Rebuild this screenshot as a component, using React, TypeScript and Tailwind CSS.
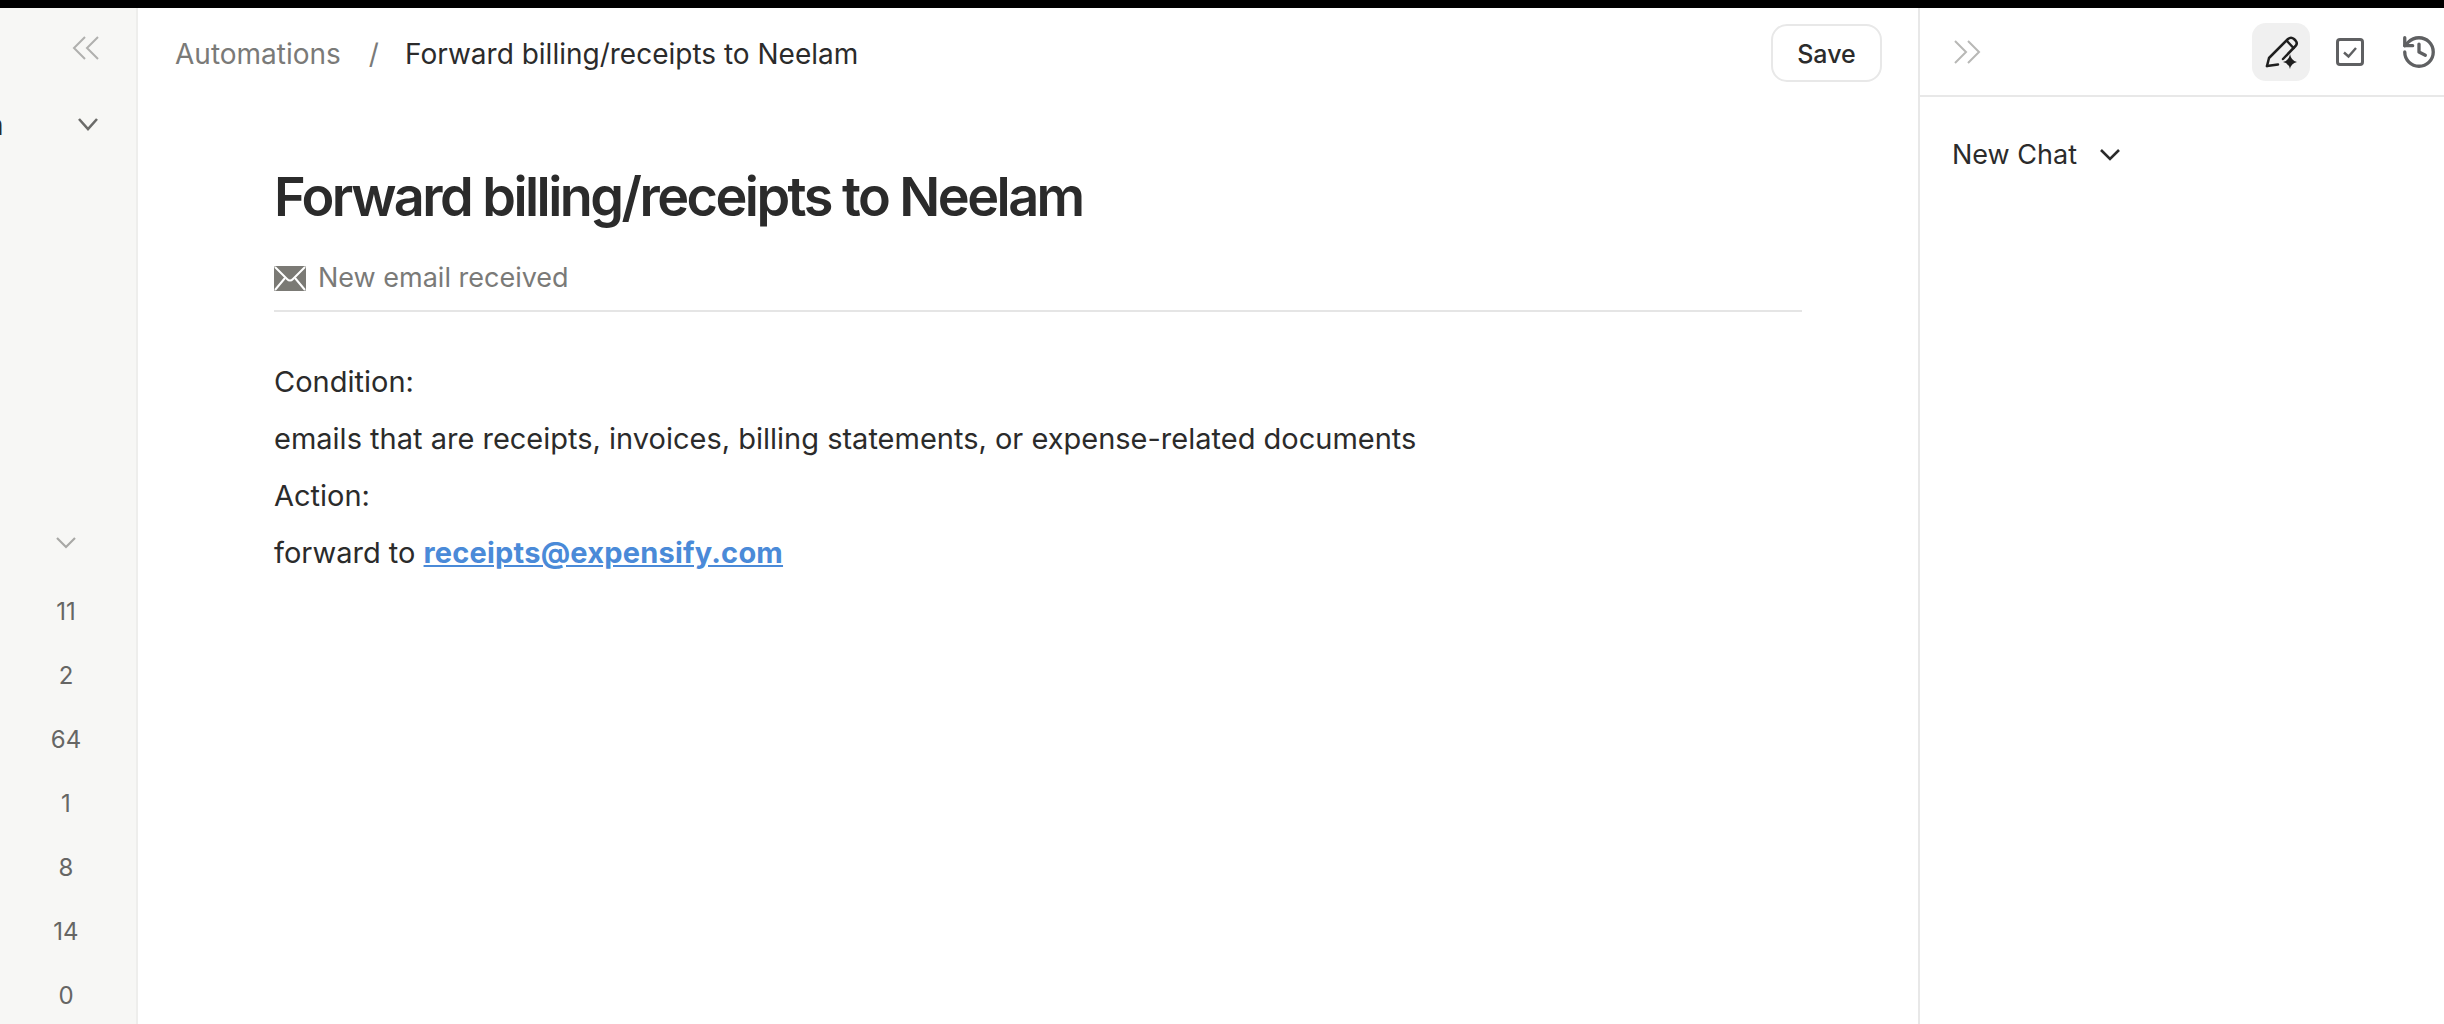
import { History } from "lucide-react";

const font = { fontFamily: "Inter, 'Liberation Sans', sans-serif" };
const counts = ["11", "2", "64", "1", "8", "14", "0"];

function Chevrons({ dir, className }: { dir: "left" | "right"; className?: string }) {
  return (
    <svg width="28" height="24" viewBox="0 0 28 24" fill="none" stroke="currentColor" strokeWidth="2" className={className}>
      {dir === "left" ? (
        <>
          <path d="M13 1 L2 12 L13 23" />
          <path d="M26 1 L15 12 L26 23" />
        </>
      ) : (
        <>
          <path d="M2 1 L13 12 L2 23" />
          <path d="M15 1 L26 12 L15 23" />
        </>
      )}
    </svg>
  );
}

function Down({ w, h, sw, className }: { w: number; h: number; sw: number; className?: string }) {
  return (
    <svg width={w} height={h} viewBox={`0 0 ${w} ${h}`} fill="none" stroke="currentColor" strokeWidth={sw} className={className}>
      <path d={`M1 1 L${w / 2} ${h - 2} L${w - 1} 1`} />
    </svg>
  );
}

function PenSpark() {
  return (
    <svg width="34" height="34" viewBox="0 0 34 34" fill="none" stroke="#1f1f1f" strokeWidth="2.5" strokeLinejoin="round" strokeLinecap="round">
      <path d="M3 31 L5 23 L24 4 Q27 1.5 30 4 L31.5 5.5 Q34 8.5 31.5 11 L19 24" />
      <path d="M14 29.5 L3 31" />
      <path d="M23 6 L29.5 13" />
      <path d="M26 19 Q27 25.5 33 27 Q27 28.5 26 34 Q25 28.5 19 27 Q25 25.5 26 19 Z" fill="#1f1f1f" stroke="none" />
    </svg>
  );
}

function CheckBox() {
  return (
    <svg width="28" height="28" viewBox="0 0 28 28" fill="none" stroke="#5f6062">
      <rect x="1.5" y="1.5" width="25" height="25" rx="2.5" strokeWidth="3" />
      <path d="M8 14.5 L12.5 18.5 L20 10" strokeWidth="2.4" />
    </svg>
  );
}

function Envelope() {
  return (
    <svg width="32" height="25" viewBox="0 0 32 25" className="shrink-0">
      <rect x="0" y="0" width="32" height="25" rx="1.5" fill="#7b7a75" />
      <path d="M1 1 L13 13 Q16 16 19 13 L31 1" fill="none" stroke="#fff" strokeWidth="2" />
      <path d="M1 24 L11 12 M31 24 L21 12" fill="none" stroke="#fff" strokeWidth="2" />
    </svg>
  );
}

export default function App() {
  return (
    <div className="flex h-[1024px] w-[2444px] flex-col overflow-hidden bg-white" style={font}>
      <div className="h-2 shrink-0 bg-black" />
      <div className="flex min-h-0 flex-1">
        <aside className="flex w-[138px] shrink-0 flex-col overflow-hidden border-r-2 border-[#eeeeec] bg-[#f7f7f5]">
          <div className="flex h-[89px] shrink-0 items-center justify-end pr-[36px] pb-[10px]">
            <Chevrons dir="left" className="text-[#b0b0ae]" />
          </div>
          <div className="flex h-[58px] shrink-0 items-center justify-between pr-[38px] pb-[4px]">
            <span className="mt-[2px] -ml-[13px] text-[28px] leading-none text-[#2b2b2b]">n</span>
            <Down w={20} h={13} sw={2.6} className="text-[#6b6b69]" />
          </div>
          <div className="mt-[382px] flex w-[132px] shrink-0 flex-col items-center">
            <Down w={20} h={12} sw={2.2} className="text-[#a8a8a6]" />
            <div className="mt-[50px] flex flex-col items-center gap-[38px]">
              {counts.map((c) => (
                <span key={c} className="h-[26px] text-[24px] leading-[26px] text-[#666664]">
                  {c}
                </span>
              ))}
            </div>
          </div>
        </aside>

        <main className="flex min-w-0 flex-1 flex-col">
          <header className="flex h-[89px] shrink-0 items-start justify-between pt-[16px] pr-[36px] pl-[37px]">
            <div className="flex h-[60px] items-center text-[28px]">
              <span className="text-[#7a7a78]">Automations</span>
              <span className="ml-[28px] text-[#7a7a78]">/</span>
              <span className="ml-[26px] text-[#2b2b2b]">Forward billing/receipts to Neelam</span>
            </div>
            <button className="flex h-[58px] w-[111px] items-center justify-center rounded-[16px] border-2 border-[#e8e8e8] pt-[3px] text-[25px] font-medium text-[#2b2b2b]">
              Save
            </button>
          </header>
          <div className="w-[1664px] pl-[136px]">
            <h1 className="mt-[65px] text-[54px] leading-[70px] font-semibold tracking-[-0.047em] text-[#2b2b2b]">
              Forward billing/receipts to Neelam
            </h1>
            <div className="mt-[23px] flex h-[57px] items-center gap-[12px] border-b-2 border-[#e5e5e5] pb-[8px] text-[27px] text-[#7a7a78]">
              <Envelope />
              <span>New email received</span>
            </div>
            <div className="mt-[50px] flex flex-col gap-[17px] text-[29px] leading-[40px] text-[#2b2b2b]">
              <p>Condition:</p>
              <p>emails that are receipts, invoices, billing statements, or expense-related documents</p>
              <p>Action:</p>
              <p>
                forward to{" "}
                <a className="font-bold tracking-[0.2px] text-[#4a8ad8] underline">receipts@expensify.com</a>
              </p>
            </div>
          </div>
        </main>

        <section className="flex w-[526px] shrink-0 flex-col overflow-hidden border-l-2 border-[#e8e8e8]">
          <div className="flex h-[89px] shrink-0 items-center border-b-2 border-[#e8e8e8] pl-[33px]">
            <Chevrons dir="right" className="text-[#b8b8b6]" />
            <div className="ml-[271px] flex h-[58px] w-[58px] shrink-0 items-center justify-center rounded-[14px] bg-[#f0f0f0]">
              <PenSpark />
            </div>
            <div className="ml-[26px] shrink-0">
              <CheckBox />
            </div>
            <History size={38} strokeWidth={2.1} className="ml-[36px] shrink-0 text-[#5f6062]" />
          </div>
          <div className="mt-[38px] flex items-center pl-[32px] text-[27px] text-[#2b2b2b]">
            <span>New Chat</span>
            <Down w={20} h={12} sw={2.6} className="ml-[23px] text-[#2b2b2b]" />
          </div>
        </section>
      </div>
    </div>
  );
}
